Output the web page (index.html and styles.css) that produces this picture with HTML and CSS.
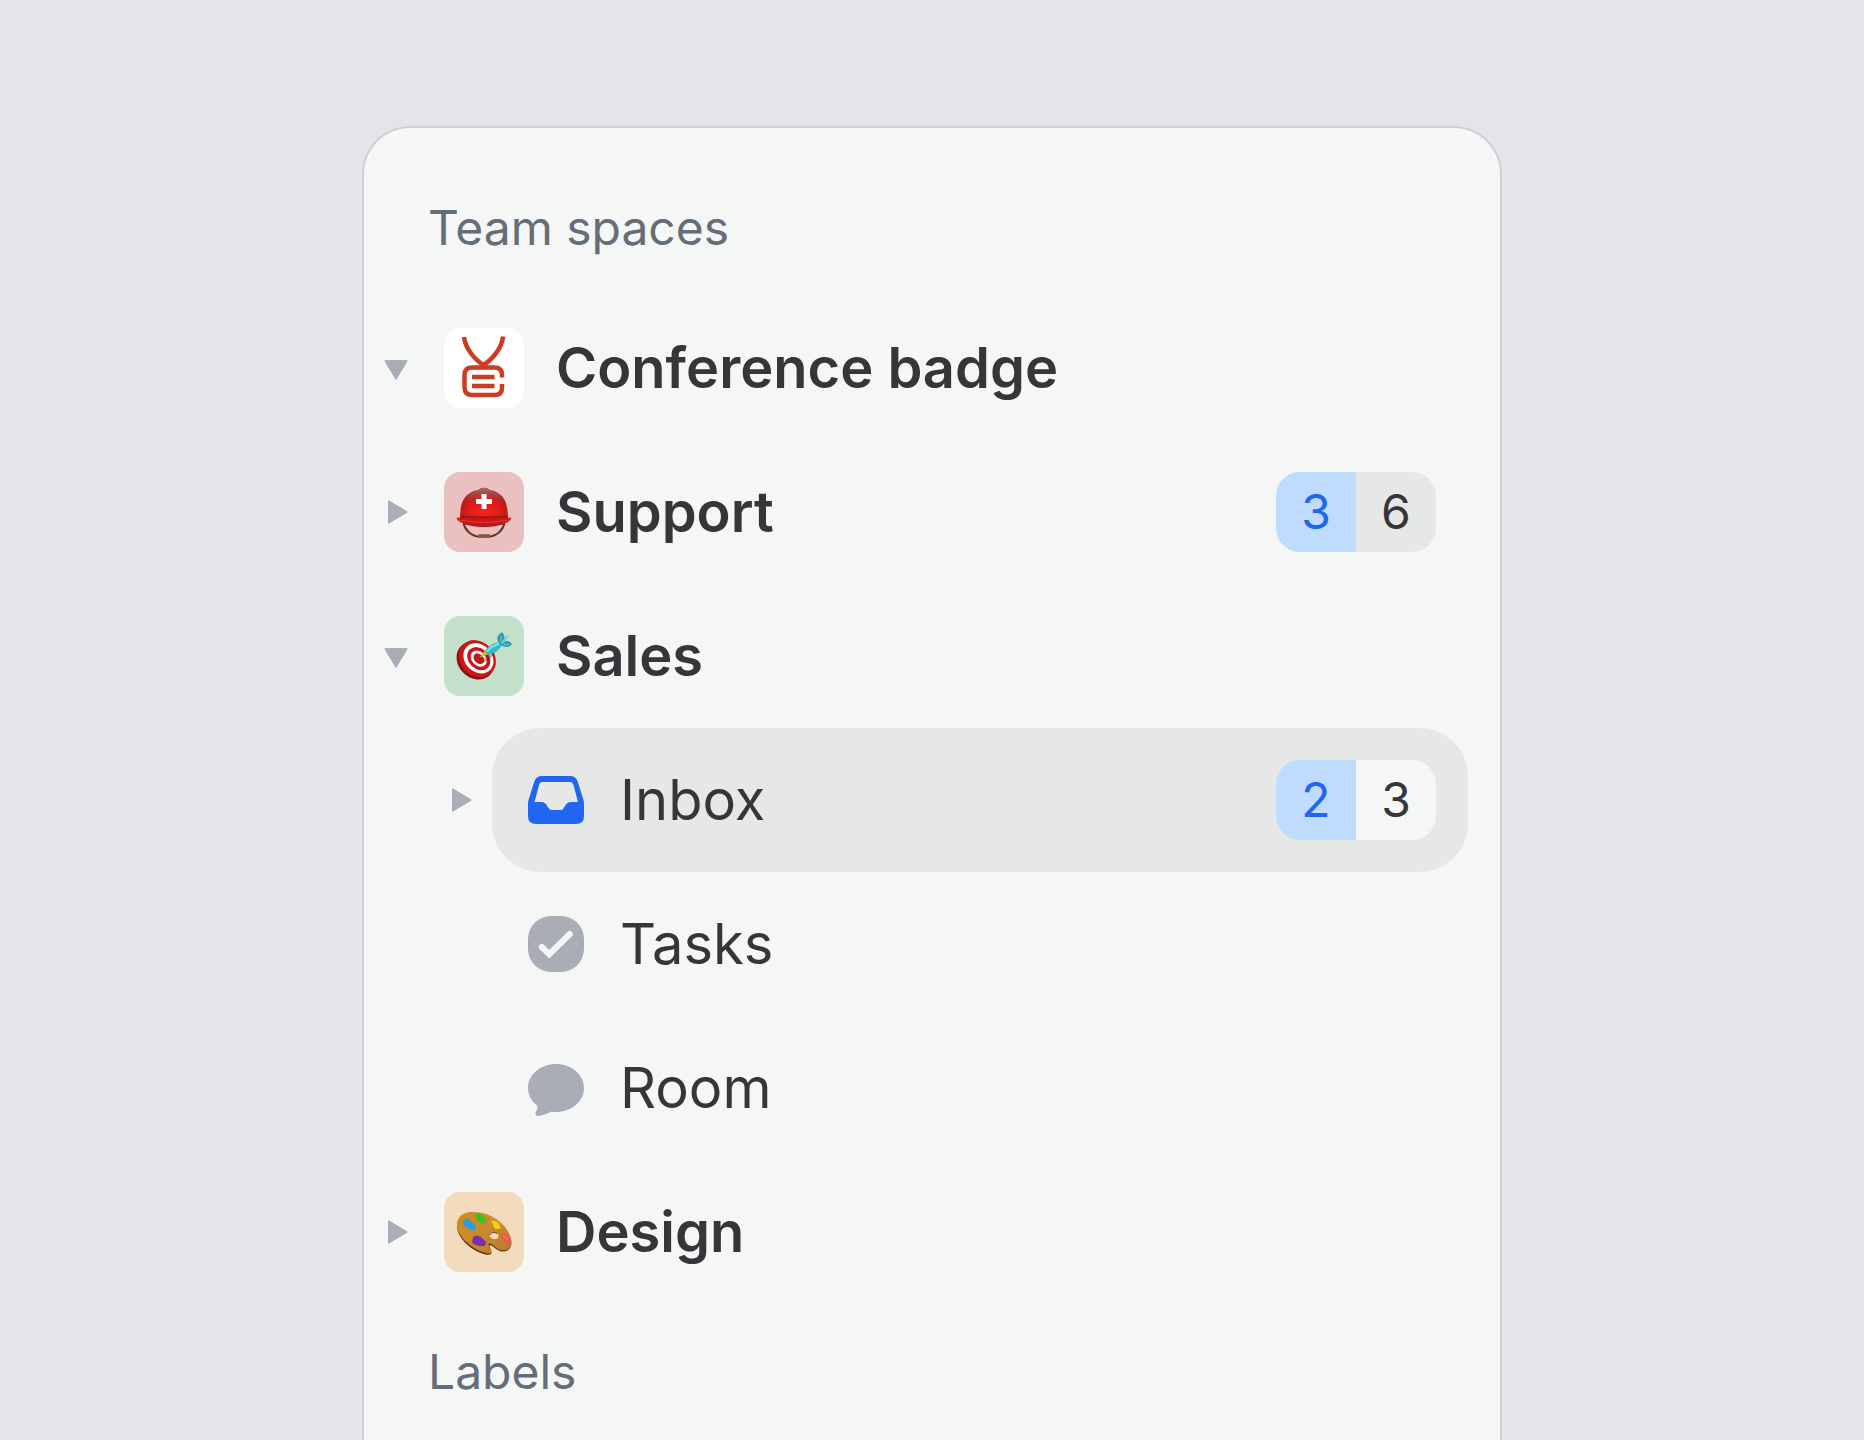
FILE: index.html
```html
<!DOCTYPE html>
<html lang="en">
<head>
  <meta charset="UTF-8">
  <meta name="viewport" content="width=device-width, initial-scale=1">
  <title>Team spaces</title>
  <link rel="stylesheet" href="styles.css">
</head>
<body>
  <nav class="sidebar">
    <h2 class="section-title">Team spaces</h2>

    <ul class="tree">
      <!-- Conference badge -->
      <li>
        <div class="item">
          <button class="toggle" type="button" aria-expanded="true" aria-label="Toggle Conference badge">
            <svg class="caret" viewBox="0 0 24 24"><path d="M5 1.5 22.5 12 5 22.5Z"/></svg>
          </button>
          <a class="row space" href="#">
            <svg class="tile tile-white" viewBox="0 0 80 80" aria-hidden="true">
              <g fill="none" stroke="#cc3c24" stroke-width="4.500">
                <path d="M20 9C21 20 31 32 39.500 37C48 32 58 20 59 8.500"/>
                <path d="M58 49.500V47Q58 39.500 50.500 39.500H28.500Q20.500 39.500 20.500 47V59.500Q20.500 67 28.500 67H50.500Q58 67 58 60V56"/>
                <path d="M28 49H50.500M28 58H50.500"/>
              </g>
            </svg>
            <span class="name">Conference badge</span>
          </a>
        </div>
      </li>

      <!-- Support -->
      <li>
        <div class="item">
          <button class="toggle" type="button" aria-expanded="false" aria-label="Toggle Support">
            <svg class="caret" viewBox="0 0 24 24"><path d="M5 1.5 22.5 12 5 22.5Z"/></svg>
          </button>
          <a class="row space" href="#">
            <svg class="tile tile-red" viewBox="0 0 80 80" aria-hidden="true">
              <defs>
                <radialGradient id="dome" cx="0.5" cy="0.75" r="0.7">
                  <stop offset="0" stop-color="#f8231f"/>
                  <stop offset="0.5" stop-color="#dc1c19"/>
                  <stop offset="1" stop-color="#8f1a18"/>
                </radialGradient>
                <linearGradient id="shine" x1="0" y1="0" x2="0" y2="1">
                  <stop offset="0" stop-color="#ab7168"/>
                  <stop offset="1" stop-color="#ab4a43" stop-opacity="0"/>
                </linearGradient>
              </defs>
              <path d="M19.500 51C21 58 27 64 35 64.500H45C53 64 59 58 60.500 51" fill="none" stroke="#60371f" stroke-width="2"/>
              <path d="M34.500 64H46" stroke="#83563c" stroke-width="3.500"/>
              <path d="M16 47C16 32 19 21 34 18Q40 13.500 46 18C61 21 64 32 64 47Z" fill="url(#dome)"/>
              <path d="M19 31Q23 20 34 18Q40 13.500 46 18Q57 20 61 31Q40 23 19 31Z" fill="url(#shine)"/>
              <path d="M12.500 45.500Q15 46.500 17 44.500Q40 47 63 44.500Q65 46.500 67.500 45.500Q67 50 58 52Q40 57 22 52Q13 50 12.500 45.500Z" fill="#c91619"/>
              <path d="M17 44.500Q40 46 63 44.500" fill="none" stroke="#80100e" stroke-width="1.200"/>
              <path d="M14 48Q40 52.500 66 48" fill="none" stroke="#ef3431" stroke-width="1.200"/>
              <path d="M21 52Q40 57 59 52" fill="none" stroke="#8c1114" stroke-width="1"/>
              <path d="M40 22V37M32 29.500H48" stroke="#fff" stroke-width="5"/>
            </svg>
            <span class="name">Support</span>
            <span class="counts">
              <span class="count count-new">3</span>
              <span class="count">6</span>
            </span>
          </a>
        </div>
      </li>

      <!-- Sales -->
      <li>
        <div class="item">
          <button class="toggle" type="button" aria-expanded="true" aria-label="Toggle Sales">
            <svg class="caret" viewBox="0 0 24 24"><path d="M5 1.5 22.5 12 5 22.5Z"/></svg>
          </button>
          <a class="row space" href="#">
            <svg class="tile tile-green" viewBox="0 0 80 80" aria-hidden="true">
              <g transform="rotate(45 33 43)">
                <ellipse cx="33" cy="45" rx="20.500" ry="17.500" fill="#8e0f12"/>
                <ellipse cx="33" cy="42.500" rx="20" ry="17" fill="#cb1519"/>
                <ellipse cx="33.500" cy="41.500" rx="16.500" ry="13.500" fill="#fff"/>
                <ellipse cx="34" cy="41.500" rx="12.800" ry="10.200" fill="#cb1519"/>
                <ellipse cx="34" cy="41.500" rx="9" ry="7" fill="#fff"/>
                <ellipse cx="34" cy="41.500" rx="6" ry="4.500" fill="#b81c1c"/>
              </g>
              <path d="M38 47Q47 45 51 36L42 38Z" fill="#681318" opacity="0.350"/>
              <path d="M35.500 41.500 41 34.500 44 38.500Z" fill="#e1b52b"/>
              <path d="M41 35Q45 28.500 53 26.500L58.500 27.500Q56 36 44 39Z" fill="#35b9cb"/>
              <path d="M43 35.500Q47 30 55 28" fill="none" stroke="#7ee4e8" stroke-width="2"/>
              <path d="M55 27Q50.500 21 58 16.300Q62 20 60 25.500Q65 24 68 28Q64 33.500 57 29Z" fill="#2499b0"/>
              <path d="M56 27.500 63.500 18.500 64 21 59.500 27.500Z" fill="#7accd6"/>
              <path d="M57.500 19.500 56.500 25.500M59.500 28.500 65.500 28.500" fill="none" stroke="#58c8d5" stroke-width="1.500"/>
            </svg>
            <span class="name">Sales</span>
          </a>
        </div>

        <ul class="subtree">
          <li>
            <div class="item">
              <button class="toggle" type="button" aria-expanded="false" aria-label="Toggle Inbox">
                <svg class="caret" viewBox="0 0 24 24"><path d="M5 1.5 22.5 12 5 22.5Z"/></svg>
              </button>
              <a class="row channel active" href="#" aria-current="page">
                <svg class="icon" viewBox="0 0 56 56" aria-hidden="true">
                  <path fill-rule="evenodd" d="M14 4H42Q47.500 4 49.500 9L55.500 28Q56 30 56 32V44Q56 52 48 52H8Q0 52 0 44V32Q0 30 .5 28L6.500 9Q8.500 4 14 4ZM14.500 10Q12 10 11.300 12L6.500 30H13C20 30 19 38 24 38H33C37 38 36 30 43.500 30H50L45.500 13Q44.700 10 42 10Z"/>
                </svg>
                <span class="name">Inbox</span>
                <span class="counts">
                  <span class="count count-new">2</span>
                  <span class="count">3</span>
                </span>
              </a>
            </div>
          </li>
          <li>
            <div class="item">
              <span class="toggle"></span>
              <a class="row channel" href="#">
                <svg class="icon" viewBox="0 0 56 56" aria-hidden="true">
                  <path d="M24 0H32C46 0 56 10 56 24V32C56 46 46 56 32 56H24C10 56 0 46 0 32V24C0 10 10 0 24 0Z"/>
                  <path class="check" d="M13.800 31 21.300 38.200 41.800 18"/>
                </svg>
                <span class="name">Tasks</span>
              </a>
            </div>
          </li>
          <li>
            <div class="item">
              <span class="toggle"></span>
              <a class="row channel" href="#">
                <svg class="icon" viewBox="0 0 56 56" aria-hidden="true">
                  <path d="M28 4C43.500 4 56 14.700 56 28S43.500 52 28 52Q25.500 52 23.500 51.500Q18 55 11 56Q7 56 7.500 52.500Q10 49.500 9.500 46Q0 39 0 28C0 14.700 12.500 4 28 4Z"/>
                </svg>
                <span class="name">Room</span>
              </a>
            </div>
          </li>
        </ul>
      </li>

      <!-- Design -->
      <li>
        <div class="item">
          <button class="toggle" type="button" aria-expanded="false" aria-label="Toggle Design">
            <svg class="caret" viewBox="0 0 24 24"><path d="M5 1.5 22.5 12 5 22.5Z"/></svg>
          </button>
          <a class="row space" href="#">
            <svg class="tile tile-orange" viewBox="0 0 80 80" aria-hidden="true">
              <defs>
                <linearGradient id="wood" x1="0" y1="0" x2="1" y2="1">
                  <stop offset="0" stop-color="#cf8d22"/>
                  <stop offset="0.5" stop-color="#c88a2b"/>
                  <stop offset="1" stop-color="#b87930"/>
                </linearGradient>
              </defs>
              <path d="M13 34C13 26 19 21 28 21C47 20 64 34 67 48C69 57 62 61 56 59C51 57 48 53 46 53C44 55 49 58 47 62C40 66 13 51 13 34Z" fill="#5b2a17"/>
              <path d="M13 33C13 25 19 20 28 20C47 19 64 33 67 47C69 56 62 60 56 58C51 56 48 51 45.500 51.500C42 53 49 57 47 61C40 64 13 49 13 33Z" fill="url(#wood)"/>
              <ellipse cx="50" cy="43.500" rx="4.500" ry="3.500" transform="rotate(20 50 43.500)" fill="#f2dabd"/>
              <path d="M45.800 43Q48 38.500 53 41.500" fill="none" stroke="#653015" stroke-width="1"/>
              <path d="M19 28Q24 25 27 29L32 34 31 39Q27 38 25 37L19 33Z" fill="#2e9dda"/>
              <path d="M31 22Q36 20 39 24L42 28 41 31 37 31 34 29Z" fill="#32c719"/>
              <path d="M47 29Q52 28 55 32L57 36Q53 38 50 36L49 32Z" fill="#f5d114"/>
              <path d="M56.500 42Q61 40.500 64 44L67 51Q63 53 60 49Z" fill="#ed554d"/>
              <path d="M59 43.500 64 48" stroke="#ff918a" stroke-width="1"/>
              <path d="M29 45 33 43.500 37 45 42 50 41 54 35 54 32 53 28 51Z" fill="#802cae"/>
            </svg>
            <span class="name">Design</span>
          </a>
        </div>
      </li>
    </ul>

    <h2 class="section-title">Labels</h2>
  </nav>
</body>
</html>
```

FILE: styles.css
```css
:root {
  --page-bg: #e4e5ea;
  --panel-bg: #f5f7f6;
  --panel-border: #cfd0d5;
  --text: #35363a;
  --muted: #656d78;
  --icon: #a9aeb6;
  --accent: #2166f0;
  --accent-bg: #bfdcff;
  --hover-bg: #e6e8e7;
}

* {
  box-sizing: border-box;
}

body {
  margin: 0;
  padding-top: 126px;
  min-height: 100vh;
  display: flex;
  justify-content: center;
  background: var(--page-bg);
  color: var(--text);
  font-family: Inter, "Liberation Sans", sans-serif;
}

/* Sidebar panel */
.sidebar {
  width: 100%;
  max-width: 1140px;
  padding: 32px 32px 0 20px;
  background: var(--panel-bg);
  border: 2px solid var(--panel-border);
  border-bottom: none;
  border-radius: 48px 48px 0 0;
}

.section-title {
  margin: 0;
  padding-left: 44px;
  font-size: 48px;
  font-weight: 400;
  line-height: 136px;
  color: var(--muted);
}

.tree,
.subtree {
  margin: 0;
  padding: 0;
  list-style: none;
}

.subtree {
  padding-left: 64px;
}

/* One line of the tree: caret + row */
.item {
  display: flex;
  align-items: center;
  gap: 20px;
}

.toggle {
  flex: none;
  width: 24px;
  height: 24px;
  padding: 0;
  border: none;
  background: none;
  cursor: pointer;
}

.caret {
  display: block;
  fill: var(--icon);
  stroke: var(--icon);
  stroke-width: 2;
  stroke-linejoin: round;
}

.toggle[aria-expanded="true"] .caret {
  transform: rotate(90deg);
}

.row {
  flex: 1;
  min-width: 0;
  height: 144px;
  display: flex;
  align-items: center;
  padding-right: 32px;
  border-radius: 48px;
  color: inherit;
  font-size: 56px;
  line-height: 72px;
  text-decoration: none;
}

.space {
  gap: 32px;
  padding-left: 16px;
  font-weight: 600;
}

.channel {
  gap: 36px;
  padding-left: 36px;
}

.active {
  background: var(--hover-bg);
}

.name {
  flex: 1;
  white-space: nowrap;
}

/* Icons */
.tile {
  flex: none;
  width: 80px;
  height: 80px;
  border-radius: 16px;
}

.tile-white { background: #fff; }
.tile-red { background: #ebc0c0; }
.tile-green { background: #c4e0ca; }
.tile-orange { background: #f2dabd; }

.icon {
  flex: none;
  width: 56px;
  height: 56px;
  fill: var(--icon);
}

.active .icon {
  fill: var(--accent);
}

.icon .check {
  fill: none;
  stroke: var(--panel-bg);
  stroke-width: 6;
  stroke-linecap: round;
}

/* Counters */
.counts {
  display: flex;
  overflow: hidden;
  border-radius: 24px;
  font-size: 48px;
  font-weight: 400;
  line-height: 80px;
  text-align: center;
}

.count {
  width: 80px;
  background: var(--hover-bg);
}

.active .count {
  background: var(--panel-bg);
}

.count-new,
.active .count-new {
  background: var(--accent-bg);
  color: var(--accent);
}
```
